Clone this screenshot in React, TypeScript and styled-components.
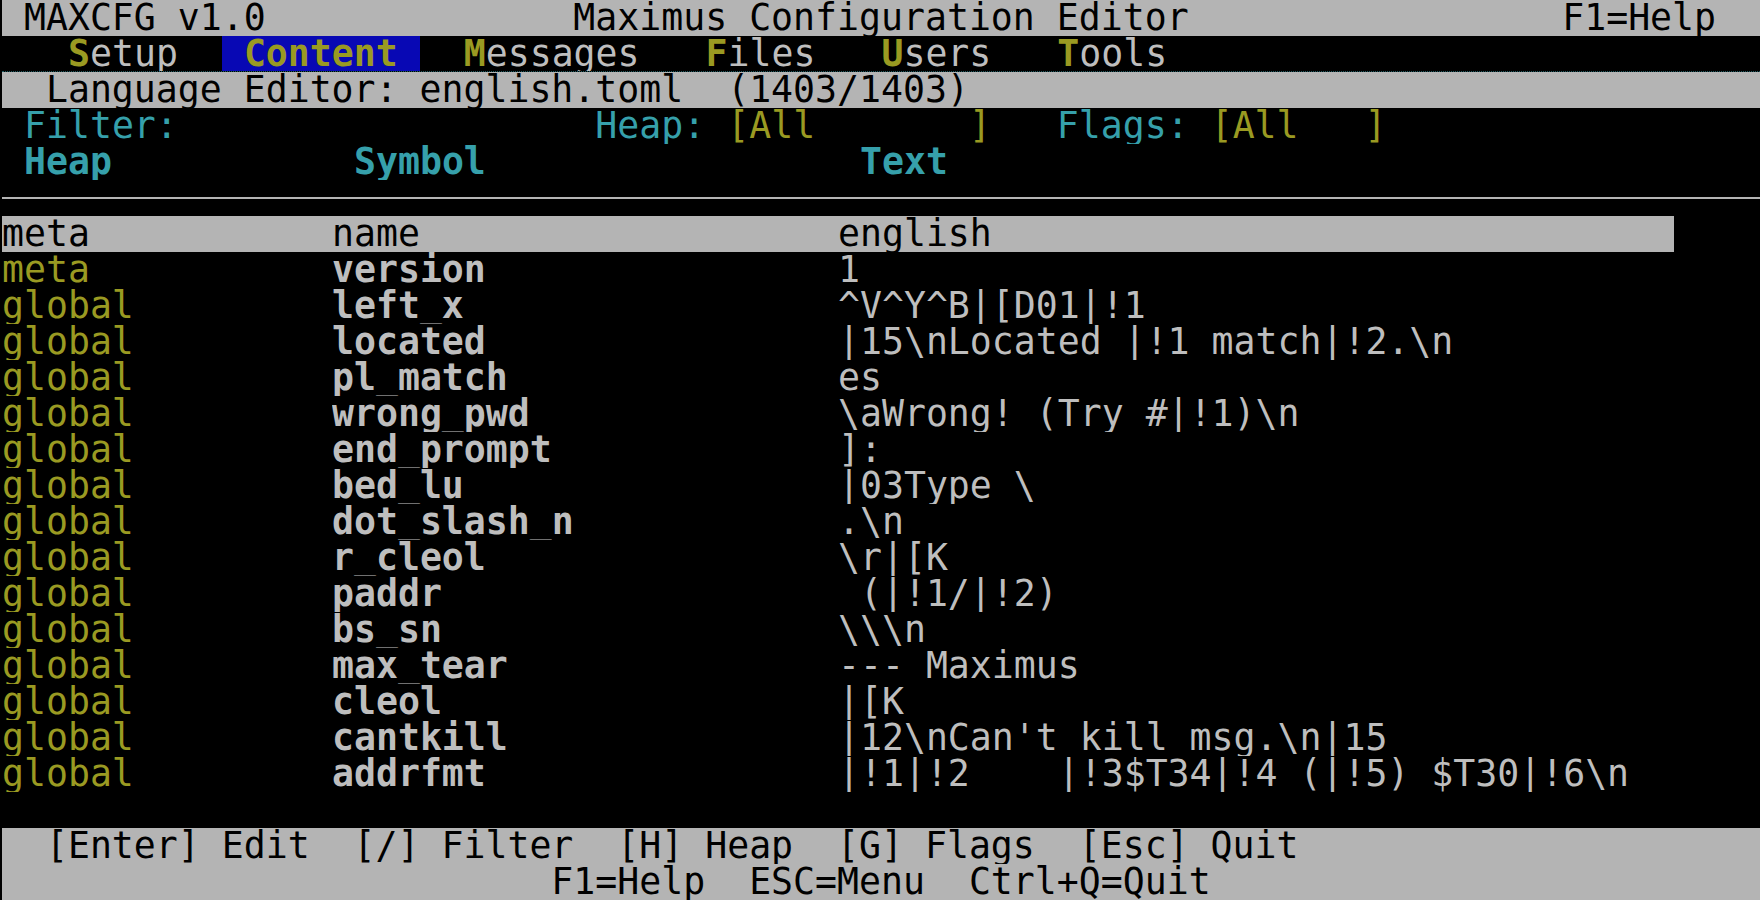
import React from "react";
import styled, { createGlobalStyle } from "styled-components";

const CELL = 22;
const ROW = 36;

const GRAY = "#b4b4b4";
const TEXT = "#bebebe";
const OLIVE = "#9a9a22";
const TEAL = "#36a0ab";
const BLUE = "#0808b4";

const GlobalStyle = createGlobalStyle`
  html, body {
    margin: 0;
    padding: 0;
    background: #000;
  }
  body {
    font-family: "DejaVu Sans Mono", "Liberation Mono", monospace;
    font-size: 36.5px;
    color: ${TEXT};
  }
`;

const Screen = styled.div`
  width: 1760px;
  height: 900px;
  overflow: hidden;
  background: #000;
  display: flex;
  flex-direction: column;
  padding-left: 2px;
  box-sizing: border-box;
`;

const Line = styled.div<{ $bg?: string; $fg?: string }>`
  height: ${ROW}px;
  line-height: ${ROW}px;
  white-space: pre;
  overflow: hidden;
  background: ${(p) => p.$bg || "transparent"};
  color: ${(p) => p.$fg || TEXT};
`;

const MenuBar = styled(Line)`
  display: flex;
  gap: ${CELL}px;
  padding-left: ${CELL * 2}px;
  border-bottom: 1px dotted #1f5a60;
  box-sizing: border-box;
`;

const MenuItem = styled.span<{ $active?: boolean }>`
  padding: 0 ${CELL}px;
  background: ${(p) => (p.$active ? BLUE : "transparent")};
  color: ${(p) => (p.$active ? OLIVE : TEXT)};
  font-weight: ${(p) => (p.$active ? "bold" : "normal")};
`;

const Hot = styled.span`
  color: ${OLIVE};
  font-weight: bold;
`;

const Label = styled.span<{ $bold?: boolean }>`
  color: ${TEAL};
  font-weight: ${(p) => (p.$bold ? "bold" : "normal")};
`;

const Field = styled.span`
  color: ${OLIVE};
`;

const Cols = styled(Line)<{ $indent?: number; $width?: number }>`
  display: grid;
  grid-template-columns: ${CELL * 15}px ${CELL * 23}px 1fr;
  padding-left: ${(p) => (p.$indent || 0) * CELL}px;
  width: ${(p) => (p.$width ? `${p.$width * CELL}px` : "auto")};
  box-sizing: border-box;
`;

const Cell = styled.span<{ $color?: string; $bold?: boolean }>`
  color: ${(p) => p.$color || "inherit"};
  font-weight: ${(p) => (p.$bold ? "bold" : "normal")};
  overflow: hidden;
`;

const RuleRow = styled.div`
  height: ${ROW}px;
  display: flex;
  align-items: center;
`;

const Rule = styled.div`
  flex: 1;
  height: 2px;
  margin-top: -1px;
  background: ${GRAY};
`;

const StatusBar = styled.div`
  margin-top: auto;
  background: ${GRAY};
  color: #000;
`;

const menu = ["Setup", "Content", "Messages", "Files", "Users", "Tools"];

const entries: [string, string, string][] = [
  ["meta", "version", "1"],
  ["global", "left_x", "^V^Y^B|[D01|!1"],
  ["global", "located", "|15\\nLocated |!1 match|!2.\\n"],
  ["global", "pl_match", "es"],
  ["global", "wrong_pwd", "\\aWrong! (Try #|!1)\\n"],
  ["global", "end_prompt", "]:"],
  ["global", "bed_lu", "|03Type \\"],
  ["global", "dot_slash_n", ".\\n"],
  ["global", "r_cleol", "\\r|[K"],
  ["global", "paddr", " (|!1/|!2)"],
  ["global", "bs_sn", "\\\\\\n"],
  ["global", "max_tear", "--- Maximus"],
  ["global", "cleol", "|[K"],
  ["global", "cantkill", "|12\\nCan't kill msg.\\n|15"],
  ["global", "addrfmt", "|!1|!2    |!3$T34|!4 (|!5) $T30|!6\\n"],
];

export default function App() {
  return (
    <>
      <GlobalStyle />
      <Screen>
        <Line $bg={GRAY} $fg="#000">
          {" MAXCFG v1.0              Maximus Configuration Editor                 F1=Help"}
        </Line>

        <MenuBar>
          {menu.map((m) =>
            m === "Content" ? (
              <MenuItem key={m} $active>
                {m}
              </MenuItem>
            ) : (
              <MenuItem key={m}>
                <Hot>{m[0]}</Hot>
                {m.slice(1)}
              </MenuItem>
            )
          )}
        </MenuBar>

        <Line $bg={GRAY} $fg="#000">
          {"  Language Editor: english.toml  (1403/1403)"}
        </Line>

        <Line>
          {" "}
          <Label>Filter:</Label>
          {"                   "}
          <Label>Heap: </Label>
          <Field>{"[All       ]"}</Field>
          {"   "}
          <Label>Flags: </Label>
          <Field>{"[All   ]"}</Field>
        </Line>

        <Cols $indent={1}>
          <Label $bold>Heap</Label>
          <Label $bold>Symbol</Label>
          <Label $bold>Text</Label>
        </Cols>

        <RuleRow>
          <Rule />
        </RuleRow>

        <Cols $bg={GRAY} $fg="#000" $width={76}>
          <Cell>meta</Cell>
          <Cell>name</Cell>
          <Cell>english</Cell>
        </Cols>

        {entries.map(([heap, sym, text]) => (
          <Cols key={sym}>
            <Cell $color={OLIVE}>{heap}</Cell>
            <Cell $bold>{sym}</Cell>
            <Cell>{text}</Cell>
          </Cols>
        ))}

        <StatusBar>
          <Line $fg="#000">{"  [Enter] Edit  [/] Filter  [H] Heap  [G] Flags  [Esc] Quit"}</Line>
          <Line $fg="#000">{"                         F1=Help  ESC=Menu  Ctrl+Q=Quit"}</Line>
        </StatusBar>
      </Screen>
    </>
  );
}
